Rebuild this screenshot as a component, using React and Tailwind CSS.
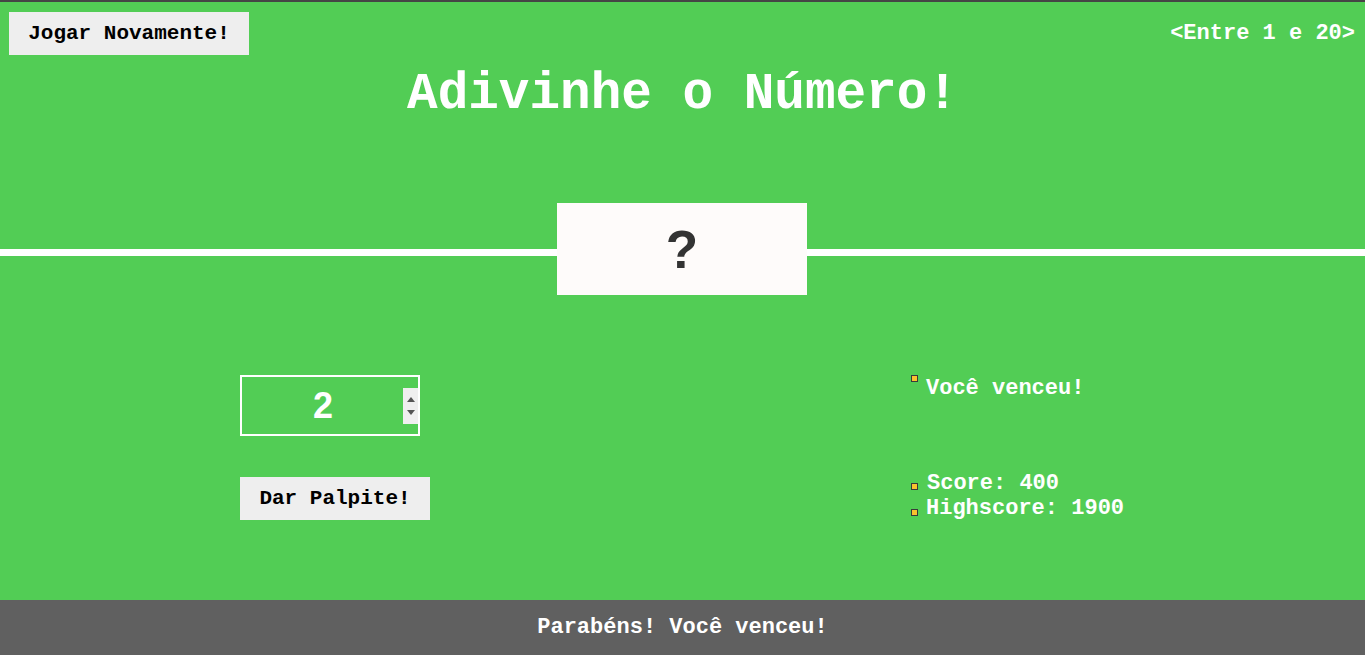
import React from "react";

const mono = { fontFamily: '"Liberation Mono", "Courier New", monospace' };
const sans = { fontFamily: '"Liberation Sans", Arial, sans-serif' };

function Bullet({ className }) {
  return <span className={"inline-block w-[7px] h-[7px] bg-[#f9c22e] border border-[#3a3a3a] shrink-0 " + className} />;
}

export default function App() {
  return (
    <div className="h-[655px] w-[1365px] flex flex-col bg-[#52cd55] border-t-2 border-[#454545] overflow-hidden" style={mono}>
      <header className="flex justify-between items-start pl-[9px] pr-[10px] pt-[10px]">
        <button className="w-[240px] h-[43px] bg-[#eeeeee] text-black font-bold text-[21px] leading-none">
          Jogar Novamente!
        </button>
        <div className="text-white font-bold text-[22px] leading-none pt-[11px]">&lt;Entre 1 e 20&gt;</div>
      </header>
      <h1 className="text-center text-white font-bold text-[51px] leading-[60px] mt-[10px]">Adivinhe o Número!</h1>
      <div className="flex items-start mt-[78px]">
        <div className="w-[557px] h-[7px] bg-white mt-[46px]" />
        <div className="w-[250px] h-[92px] bg-[#fefbfa] flex items-center justify-center">
          <span className="text-[#333333] font-bold text-[53px] leading-none" style={sans}>?</span>
        </div>
        <div className="flex-1 h-[7px] bg-white mt-[46px]" />
      </div>
      <main className="flex-1 flex pt-[80px]">
        <div className="pl-[240px] w-[911px] flex flex-col items-start">
          <div className="w-[180px] h-[61px] border-2 border-white flex items-center">
            <div className="flex-1 text-center text-white font-bold text-[36px] leading-none pl-[1px]" style={sans}>2</div>
            <div className="w-[15px] h-[36px] bg-[#efefef] flex flex-col items-center justify-center gap-[8px]">
              <svg width="8" height="5" viewBox="0 0 8 5"><path d="M0 5 L4 0 L8 5 Z" fill="#555" /></svg>
              <svg width="8" height="5" viewBox="0 0 8 5"><path d="M0 0 L4 5 L8 0 Z" fill="#555" /></svg>
            </div>
          </div>
          <button className="mt-[41px] w-[190px] h-[43px] bg-[#eeeeee] text-black font-bold text-[21px] leading-none">
            Dar Palpite!
          </button>
        </div>
        <div className="flex flex-col text-white font-bold text-[22px] leading-[25px]">
          <div className="flex items-start gap-[8px]">
            <Bullet />
            <span className="mt-[1px]">Você venceu!</span>
          </div>
          <div className="flex items-start gap-[9px] mt-[70px]">
            <Bullet className="mt-[12px]" />
            <span>Score: 400</span>
          </div>
          <div className="flex items-start gap-[8px]">
            <Bullet className="mt-[13px]" />
            <span>Highscore: 1900</span>
          </div>
        </div>
      </main>
      <footer className="h-[55px] bg-[#606060] flex items-center justify-center text-white font-bold text-[22px]">
        Parabéns! Você venceu!
      </footer>
    </div>
  );
}
